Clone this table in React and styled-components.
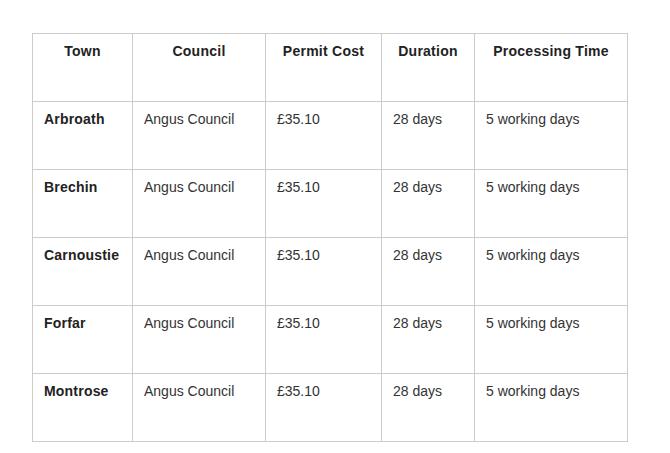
import React from 'react';
import styled, { createGlobalStyle } from 'styled-components';

const GlobalStyle = createGlobalStyle`
  html, body {
    margin: 0;
    padding: 0;
    background: #fff;
  }
  body {
    font-family: "Liberation Sans", Arial, sans-serif;
    color: #333;
  }
`;

const Wrap = styled.div`
  padding: 33px 0 0 32px;
`;

const Table = styled.table`
  border-collapse: collapse;
  table-layout: fixed;
  width: 595px;
  font-size: 14px;
  line-height: 20px;
`;

const Row = styled.tr`
  height: 68px;
`;

const Head = styled.th`
  border: 1px solid #ccc;
  padding: 7px 11px 9px;
  vertical-align: top;
  text-align: center;
  font-weight: bold;
  letter-spacing: 0.25px;
  color: #222;
`;

const Cell = styled.td`
  border: 1px solid #ccc;
  padding: 7px 11px 9px;
  vertical-align: top;
  text-align: left;
  font-weight: ${({ $strong }) => ($strong ? 'bold' : 'normal')};
  letter-spacing: ${({ $strong }) => ($strong ? '0.2px' : 'normal')};
  color: ${({ $strong }) => ($strong ? '#222' : '#333')};
`;

const columns = [
  { label: 'Town', width: 100 },
  { label: 'Council', width: 133 },
  { label: 'Permit Cost', width: 116 },
  { label: 'Duration', width: 93 },
  { label: 'Processing Time', width: 153 },
];

const towns = ['Arbroath', 'Brechin', 'Carnoustie', 'Forfar', 'Montrose'];

export default function App() {
  return (
    <>
      <GlobalStyle />
      <Wrap>
        <Table>
          <colgroup>
            {columns.map((c) => (
              <col key={c.label} style={{ width: c.width }} />
            ))}
          </colgroup>
          <thead>
            <Row>
              {columns.map((c) => (
                <Head key={c.label}>{c.label}</Head>
              ))}
            </Row>
          </thead>
          <tbody>
            {towns.map((town) => (
              <Row key={town}>
                <Cell $strong>{town}</Cell>
                <Cell>Angus Council</Cell>
                <Cell>£35.10</Cell>
                <Cell>28 days</Cell>
                <Cell>5 working days</Cell>
              </Row>
            ))}
          </tbody>
        </Table>
      </Wrap>
    </>
  );
}
